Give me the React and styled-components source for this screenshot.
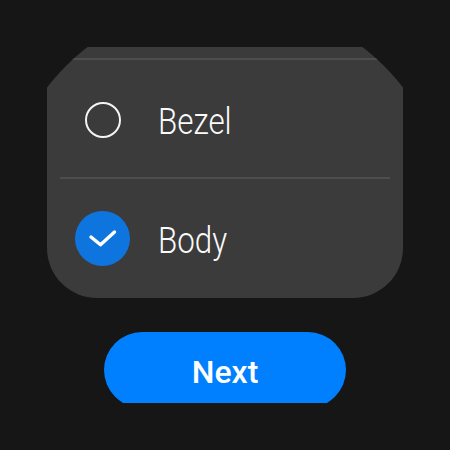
import React from "react";
import styled, { createGlobalStyle } from "styled-components";

const Global = createGlobalStyle`
  html, body { margin: 0; padding: 0; background: #161616; }
  body { font-family: Roboto, "Liberation Sans", sans-serif; }
`;

const Screen = styled.div`
  width: 450px;
  height: 450px;
  background: #161616;
  display: flex;
  flex-direction: column;
  align-items: center;
  padding-top: 47px;
  box-sizing: border-box;
  overflow: hidden;
`;

/* top corners get cut by the round watch face */
const Card = styled.div`
  width: 356px;
  height: 251px;
  background: #3b3b3b;
  border-radius: 0 0 50px 50px;
  clip-path: circle(225px at 178px 178px);
  display: flex;
  flex-direction: column;
  padding-top: 11px;
  box-sizing: border-box;
`;

const Divider = styled.div`
  height: 2px;
  flex: none;
  margin: 0 13px;
  background: #4e4e4e;
`;

const Row = styled.div`
  height: ${(p) => p.$height}px;
  padding-top: ${(p) => p.$top || 0}px;
  box-sizing: border-box;
  flex: none;
  display: flex;
  align-items: center;
  padding-left: 28px;
  gap: 28px;
`;

const Radio = styled.div`
  width: 55px;
  height: 55px;
  flex: none;
  display: flex;
  align-items: center;
  justify-content: center;
`;

const Empty = styled.div`
  width: 36px;
  height: 36px;
  box-sizing: border-box;
  border: 2px solid #f4f4f4;
  border-radius: 50%;
`;

const Checked = styled.div`
  width: 55px;
  height: 55px;
  border-radius: 50%;
  background: #0f75de;
  display: flex;
  align-items: center;
  justify-content: center;
`;

const Label = styled.span`
  font-size: 36px;
  line-height: 42px;
  font-weight: 300;
  color: #fafafa;
  display: inline-block;
  transform: translateY(2px) scaleX(0.87);
  transform-origin: left center;
`;

const NextWrap = styled.div`
  margin-top: 34px;
  width: 242px;
  height: 71px;
  overflow: hidden;
  flex: none;
`;

const NextButton = styled.button`
  width: 100%;
  height: 76px;
  border: 0;
  padding: 4px 0 0;
  border-radius: 38px;
  background: #0080ff;
  color: #fff;
  font-family: inherit;
  font-size: 32px;
  font-weight: 500;
`;

export default function App() {
  return (
    <Screen>
      <Global />
      <Card>
        <Divider />
        <Row $height={117} $top={2}>
          <Radio>
            <Empty />
          </Radio>
          <Label>Bezel</Label>
        </Row>
        <Divider />
        <Row $height={119}>
          <Radio>
            <Checked>
              <svg width="30" height="20" viewBox="0 0 30 20" fill="none">
                <path d="M3 8 L12.5 15.8 L26.5 3" stroke="#fff" strokeWidth="3.4" strokeLinecap="round" strokeLinejoin="round" />
              </svg>
            </Checked>
          </Radio>
          <Label>Body</Label>
        </Row>
      </Card>
      <NextWrap>
        <NextButton>Next</NextButton>
      </NextWrap>
    </Screen>
  );
}
